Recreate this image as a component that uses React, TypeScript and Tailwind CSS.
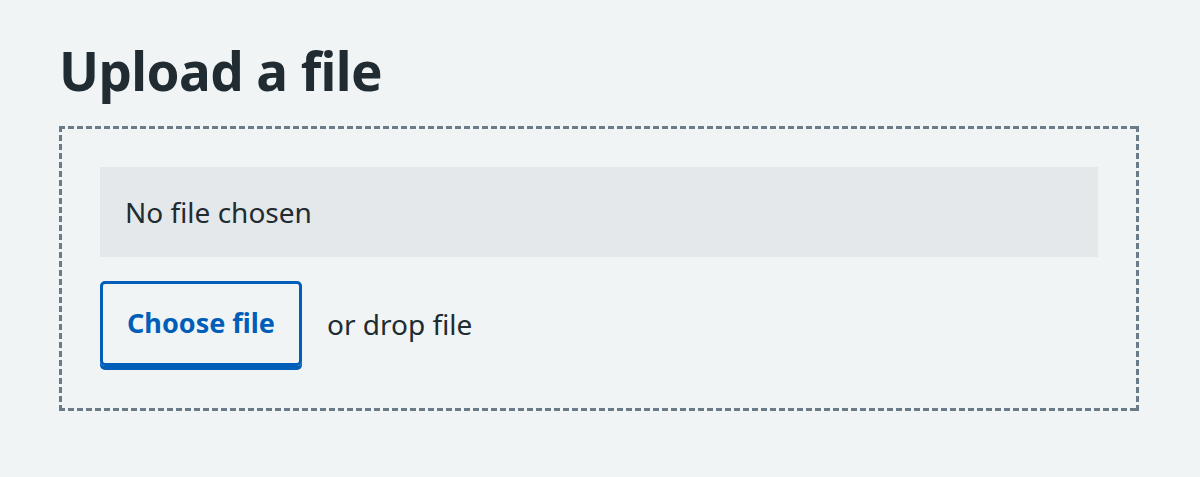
import React from "react";

export default function App() {
  return (
    <div className="min-h-[477px] w-[1200px] bg-[#f0f4f5] px-[59px] pt-[38px] text-[#212b32] font-['Noto_Sans',sans-serif]">
      <h1 className="m-0 text-[53px] font-bold leading-[66px] tracking-[-0.6px]">Upload a file</h1>
      <div className="mt-[22px] w-[1080px] px-[41px] pt-[41px] pb-[45px] bg-no-repeat [background-image:repeating-linear-gradient(90deg,#6b7c88_0_6px,transparent_6px_9px),repeating-linear-gradient(90deg,#6b7c88_0_6px,transparent_6px_9px),repeating-linear-gradient(180deg,#6b7c88_0_6px,transparent_6px_9px),repeating-linear-gradient(180deg,#6b7c88_0_6px,transparent_6px_9px)] [background-size:100%_3px,100%_3px,3px_100%,3px_100%] [background-position:0_0,0_100%,0_0,100%_0]">
        <div className="flex h-[90px] items-center bg-[#e5e8ea] pl-[25px] text-[28px]">No file chosen</div>
        <div className="mt-[24px] flex items-center">
          <button className="box-border h-[85px] w-[202px] rounded-[5px] border-[3px] border-[#005eb8] text-[27px] font-bold text-[#005eb8] shadow-[0_4px_0_#005eb8]">
            Choose file
          </button>
          <span className="ml-[25px] text-[28px]">or drop file</span>
        </div>
      </div>
    </div>
  );
}
